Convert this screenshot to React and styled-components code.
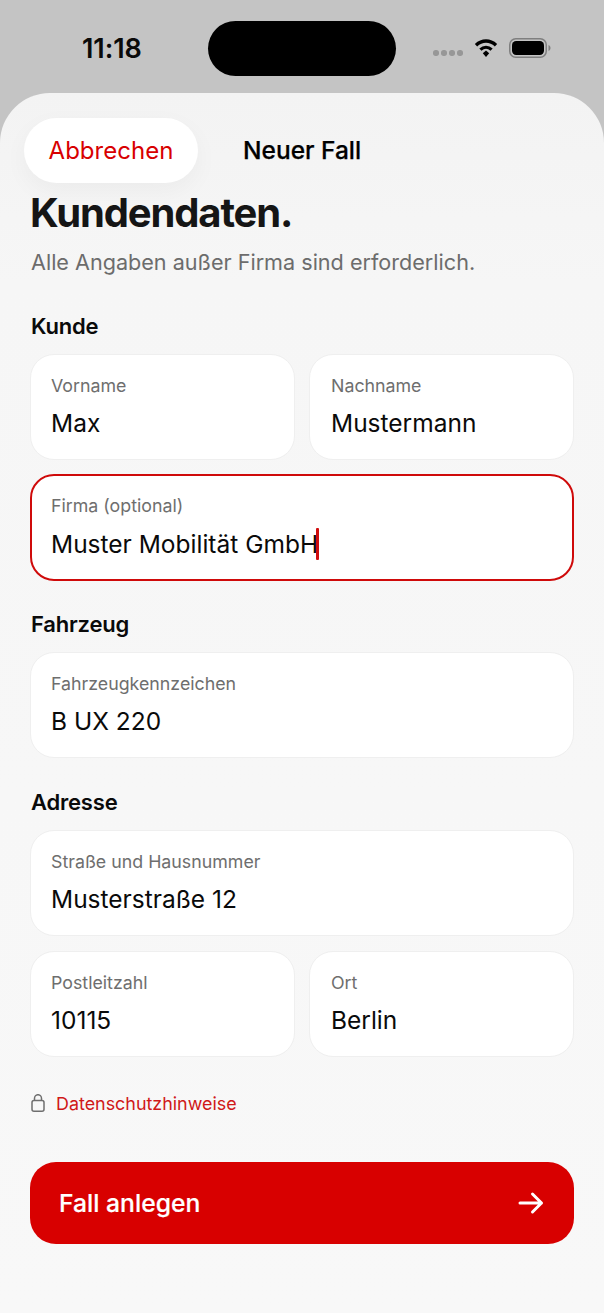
import React from "react";
import styled, { createGlobalStyle } from "styled-components";

const Global = createGlobalStyle`
  html, body { margin: 0; padding: 0; background: #c4c4c4; }
  * { box-sizing: border-box; }
  #root { width: 604px; height: 1313px; overflow: hidden; font-family: Inter, "Liberation Sans", sans-serif; }
`;
const Screen = styled.div`
  width: 604px; height: 1313px; display: flex; flex-direction: column; background: #c4c4c4;
`;
const StatusBar = styled.div`
  height: 93px; flex: none; display: flex; align-items: flex-start; padding: 21px 0 0 82px;
`;
const Time = styled.div`
  width: 126px; height: 55px; font-size: 27px; font-weight: 600; line-height: 55px; color: #0a0a0a; letter-spacing: -0.1px;
`;
const Island = styled.div`
  width: 188px; height: 55px; border-radius: 28px; background: #000;
`;
const StatusIcons = styled.div`
  display: flex; align-items: center; gap: 11px; height: 55px; margin-left: 37px; padding-bottom: 2px;
`;
const Dots = styled.div`
  display: flex; gap: 2.5px; margin-top: 11px;
`;
const Dot = styled.span`
  width: 5.5px; height: 5.5px; border-radius: 50%; background: #979797;
`;
const Sheet = styled.div`
  flex: 1; display: flex; flex-direction: column; border-radius: 50px 50px 0 0;
  background: linear-gradient(#f3f3f3, #f6f6f6 190px, #f8f8f8);
`;
const NavBar = styled.div`
  display: flex; align-items: center; padding: 25px 24px 0; gap: 45px;
`;
const CancelPill = styled.div`
  width: 174px; height: 65px; border-radius: 33px; background: #fff; color: #d80000; font-size: 24px; letter-spacing: 0.02px;
  display: flex; align-items: center; justify-content: center; box-shadow: 0 8px 24px rgba(0,0,0,.04);
`;
const NavTitle = styled.div`
  font-size: 24.5px; line-height: 28px; margin-top: -1px; font-weight: 500; color: #000; -webkit-text-stroke: 0.25px #000;
`;
const Content = styled.div`
  padding: 0 30px; display: flex; flex-direction: column;
`;
const Title = styled.h1`
  margin: 6px 0 0; font-size: 40px; line-height: 48px; font-weight: 700; letter-spacing: -1.15px; color: #151515;
`;
const Subtitle = styled.p`
  margin: 10px 0 0; padding-left: 1px; font-size: 21.6px; line-height: 30px; color: #6c6c6c;
`;
const SectionLabel = styled.h2`
  margin: ${p => p.$top}px 0 14px; padding-left: 1px; font-size: 22px; line-height: 28px; font-weight: 600; color: #0a0a0a; letter-spacing: -0.2px;
`;
const Row = styled.div`
  display: grid; grid-template-columns: 265px 265px; gap: 14px; margin-bottom: ${p => p.$bottom ?? 0}px;
  & > :nth-child(2) { padding-left: 21px; }
`;
const Field = styled.div`
  height: ${p => p.$h || 106}px; background: #fff; border-radius: 24px; padding: 21px 20px 0 20px;
  border: ${p => (p.$active ? "2px solid #cf0a0a" : "1px solid #efefef")};
  margin-bottom: ${p => p.$bottom ?? 0}px;
  ${p => p.$active && "padding: 20px 19px 0 19px;"}
`;
const FieldLabel = styled.div`
  font-size: 17.8px; line-height: 22px; margin-top: -1px; color: #6e6e6e;
`;
const FieldValue = styled.div`
  margin-top: 11px; font-size: 24.5px; line-height: 30px; color: #0a0a0a;
  display: flex; align-items: center;
`;
const Caret = styled.span`
  width: 3px; height: 32px; background: #d00d0d; border-radius: 1px; margin-left: -2px;
`;
const Privacy = styled.div`
  display: flex; align-items: center; gap: 11px; margin: 34px 0 0 1px; height: 24px;
`;
const PrivacyLink = styled.span`
  font-size: 17.9px; color: #d01818;
`;
const Submit = styled.div`
  height: 82px; margin-top: 47px; background: #d80000; border-radius: 26px; display: flex; align-items: center;
  justify-content: space-between; padding: 0 30px 0 29px; color: #fff; font-size: 24.7px; font-weight: 500; -webkit-text-stroke: 0.2px #fff;
`;

const Wifi = () => (
  <svg width="24" height="20" viewBox="0 0 24 20" fill="none">
    <path d="M2 7.2C8 1.6 16 1.6 22 7.2" stroke="#000" strokeWidth="3.4" />
    <path d="M6.4 11.6C9.7 8.6 14.3 8.6 17.6 11.6" stroke="#000" strokeWidth="3.2" />
    <path d="M8.8 15.2L12 12.6L15.2 15.2L12 19Z" fill="#000" />
  </svg>
);
const Battery = () => (
  <svg width="42" height="20" viewBox="0 0 42 20" fill="none">
    <rect x="0.75" y="0.75" width="36.5" height="18.5" rx="6" stroke="#7f7f7f" strokeWidth="1.5" />
    <rect x="3" y="3" width="32" height="14" rx="4.2" fill="#000" />
    <path d="M39.5 7v6c1.3-.5 2-1.7 2-3s-.7-2.5-2-3z" fill="#7f7f7f" />
  </svg>
);
const Lock = () => (
  <svg width="14" height="18" viewBox="0 0 14 18" fill="none" stroke="#6f6f6f" strokeWidth="1.5">
    <rect x="1" y="6.5" width="12" height="10.7" rx="2" />
    <path d="M3.5 6.5V4.2a3.5 3.5 0 0 1 7 0v2.3" />
  </svg>
);
const Arrow = () => (
  <svg width="26" height="24" viewBox="0 0 26 24" fill="none" stroke="#fff" strokeWidth="3" strokeLinecap="round" strokeLinejoin="round">
    <path d="M2 12H23.5M14.5 3l9 9-9 9" />
  </svg>
);

const TextField = ({ label, value, caret, ...rest }) => (
  <Field {...rest} $active={caret}>
    <FieldLabel>{label}</FieldLabel>
    <FieldValue>{value}{caret && <Caret />}</FieldValue>
  </Field>
);

export default function App() {
  return (
    <Screen>
      <Global />
      <StatusBar>
        <Time>11:18</Time>
        <Island />
        <StatusIcons>
          <Dots><Dot /><Dot /><Dot /><Dot /></Dots>
          <Wifi />
          <Battery />
        </StatusIcons>
      </StatusBar>
      <Sheet>
        <NavBar>
          <CancelPill>Abbrechen</CancelPill>
          <NavTitle>Neuer Fall</NavTitle>
        </NavBar>
        <Content>
          <Title>Kundendaten.</Title>
          <Subtitle>Alle Angaben außer Firma sind erforderlich.</Subtitle>
          <SectionLabel $top={35}>Kunde</SectionLabel>
          <Row $bottom={14}>
            <TextField label="Vorname" value="Max" />
            <TextField label="Nachname" value="Mustermann" />
          </Row>
          <TextField label="Firma (optional)" value="Muster Mobilität GmbH" caret $h={107} />
          <SectionLabel $top={29}>Fahrzeug</SectionLabel>
          <TextField label="Fahrzeugkennzeichen" value="B UX 220" />
          <SectionLabel $top={30}>Adresse</SectionLabel>
          <TextField label="Straße und Hausnummer" value="Musterstraße 12" $bottom={15} />
          <Row>
            <TextField label="Postleitzahl" value="10115" />
            <TextField label="Ort" value="Berlin" />
          </Row>
          <Privacy>
            <Lock />
            <PrivacyLink>Datenschutzhinweise</PrivacyLink>
          </Privacy>
          <Submit>
            <span>Fall anlegen</span>
            <Arrow />
          </Submit>
        </Content>
      </Sheet>
    </Screen>
  );
}
